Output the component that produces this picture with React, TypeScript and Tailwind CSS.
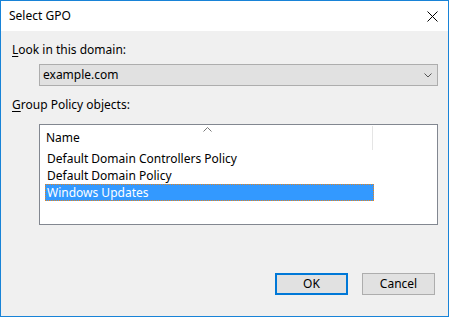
import React from "react";

export default function App() {
  const font = { fontFamily: '"Noto Sans", "Open Sans", sans-serif' };
  return (
    <div
      className="w-[449px] h-[317px] border border-[#1883d7] bg-[#f0f0f0] flex flex-col text-[12px] text-black overflow-hidden"
      style={font}
    >
      {/* Title bar */}
      <div className="h-[30px] bg-white flex items-center justify-between pl-[8px] pr-[10px] shrink-0">
        <span className="leading-[16px] mt-[-1px]">Select GPO</span>
        <svg width="11" height="11" viewBox="0 0 11 11" className="mt-[1px]">
          <path d="M0.5 0.5 L10.5 10.5 M10.5 0.5 L0.5 10.5" stroke="#000" strokeWidth="1" fill="none" />
        </svg>
      </div>

      {/* Content */}
      <div className="flex flex-col pl-[11px] pr-[10px]">
        <div className="leading-[16px] mt-[11px]">
          <span className="underline underline-offset-2">L</span>ook in this domain:
        </div>
        <div className="ml-[27px] mt-[6px] w-[399px] h-[22px] border border-[#adadad] bg-[#e1e1e1] flex items-center justify-between pl-[3px] pr-[5px]">
          <span className="leading-[16px]">example.com</span>
          <svg width="8" height="5" viewBox="0 0 8 5">
            <path d="M0.5 0.5 L4 4 L7.5 0.5" stroke="#555" strokeWidth="1" fill="none" />
          </svg>
        </div>
        <div className="leading-[16px] mt-[11px]">
          <span className="underline underline-offset-2">G</span>roup Policy objects:
        </div>
        <div className="ml-[27px] mt-[11px] w-[399px] h-[101px] border border-[#828790] bg-white flex flex-col">
          <div className="relative h-[25px] w-[333px] flex items-center pl-[6px] shrink-0">
            <span className="leading-[16px]">Name</span>
            <svg width="9" height="5" viewBox="0 0 9 5" className="absolute left-[163px] top-[2px]">
              <path d="M0.5 4.5 L4.5 0.5 L8.5 4.5" stroke="#777" strokeWidth="1" fill="none" />
            </svg>
            <div className="absolute right-0 top-[1px] h-[24px] w-px bg-[#e5e5e5]" />
          </div>
          <div className="flex flex-col pl-[5px]">
            <div className="h-[17px] w-[329px] leading-[17px] pl-[2px]">Default Domain Controllers Policy</div>
            <div className="h-[17px] w-[329px] leading-[17px] pl-[2px]">Default Domain Policy</div>
            <div className="h-[17px] w-[329px] leading-[15px] pl-[1px] bg-[#3399ff] text-white border border-dotted border-[#e8841a]">
              Windows Updates
            </div>
          </div>
        </div>
        <div className="flex justify-end mt-[48px] pr-[3px] gap-[14px]">
          <button className="w-[73px] h-[22px] border-2 border-[#0078d7] bg-[#e1e1e1] leading-[16px] flex items-center justify-center">
            OK
          </button>
          <button className="w-[73px] h-[22px] border border-[#adadad] bg-[#e1e1e1] leading-[16px] flex items-center justify-center">
            Cancel
          </button>
        </div>
      </div>
    </div>
  );
}
